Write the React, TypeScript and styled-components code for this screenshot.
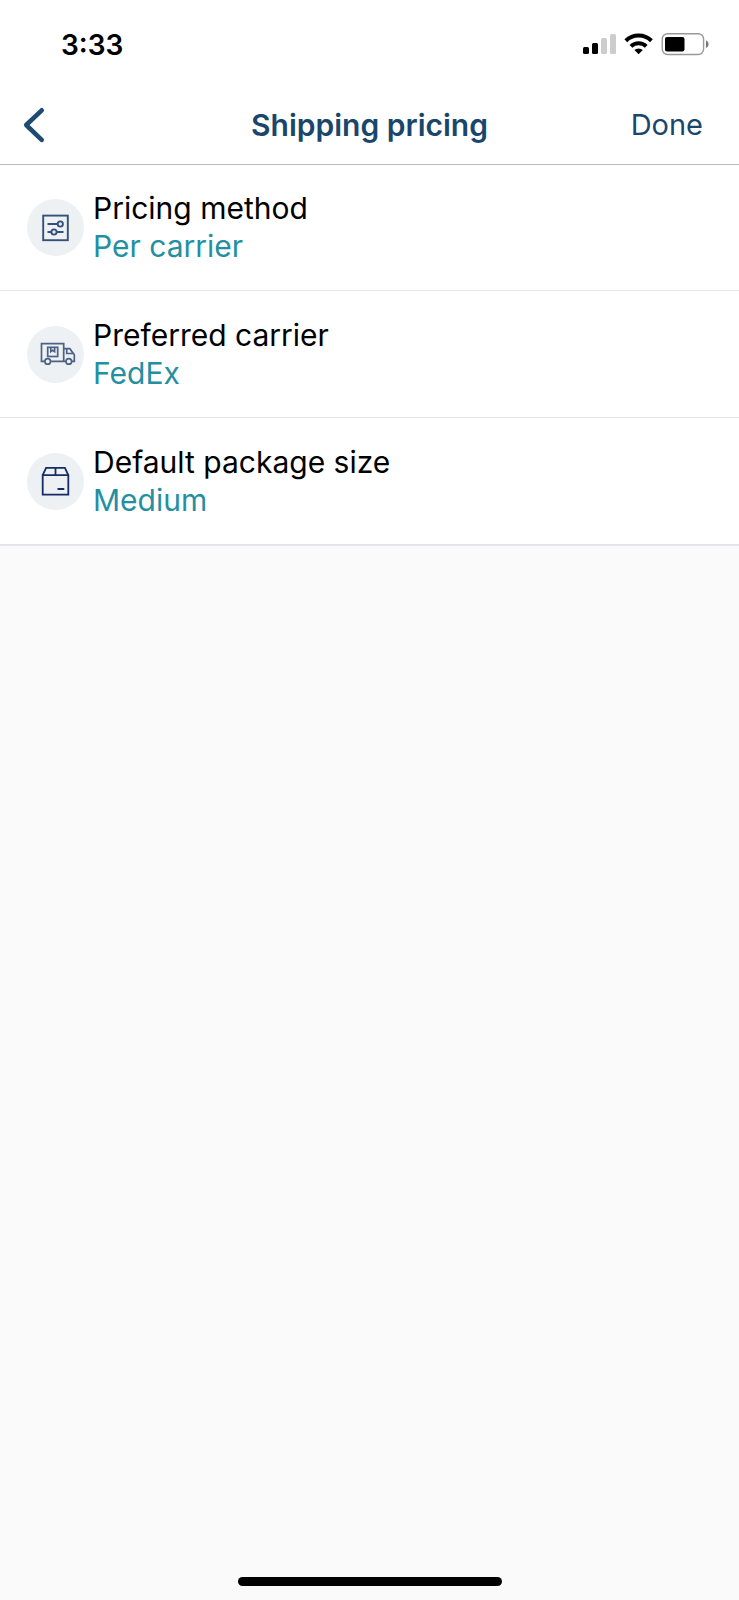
import React from "react";
import styled, { createGlobalStyle } from "styled-components";

const GlobalStyle = createGlobalStyle`
  *, *::before, *::after { box-sizing: border-box; }
  body {
    margin: 0;
    background: #fafafa;
    color: #000;
    font-family: Inter, "Liberation Sans", sans-serif;
  }
  button { font: inherit; color: inherit; background: none; border: 0; padding: 0; cursor: pointer; }
`;

const Screen = styled.div`
  min-height: 100vh;
  display: flex;
  flex-direction: column;
`;

const StatusBar = styled.div`
  display: flex;
  align-items: center;
  justify-content: space-between;
  height: 88px;
  padding: 2px 29px 0 61px;
  background: #fff;
`;

const Clock = styled.time`
  font-size: 28px;
  line-height: 34px;
  font-weight: 600;
`;

const NavBar = styled.header`
  position: relative;
  display: grid;
  grid-template-columns: 1fr auto 1fr;
  align-items: center;
  height: 76px;
  padding: 0 36px 2px 20px;
  background: #fff;
  color: #1a466c;
  font-size: 30px;
  line-height: 36px;
  box-shadow: 0 1px 0 #bdbdbd;
`;

const BackButton = styled.button`
  display: flex;
  justify-self: start;
`;

const Title = styled.h1`
  margin: 0 0 0 16px;
  font-size: inherit;
  font-weight: 600;
`;

const DoneButton = styled.button`
  justify-self: end;
  font-size: 29px;
`;

const SettingsList = styled.ul`
  margin: 0;
  padding: 0;
  list-style: none;
  background: #fff;
`;

const SettingsItem = styled.li`
  border-bottom: 1px solid #dfe7e9;

  &:last-child {
    box-shadow: 0 1px 0 #e6e9ea;
  }
`;

const RowButton = styled.button`
  display: flex;
  align-items: center;
  gap: 9px;
  width: 100%;
  padding: 25px 27px;
  text-align: left;
`;

const IconDisc = styled.span`
  display: flex;
  flex: none;
  align-items: center;
  justify-content: center;
  width: 57px;
  height: 57px;
  border-radius: 50%;
  background: #edf1f4;
`;

const RowText = styled.span`
  display: flex;
  flex-direction: column;
  font-size: 30px;
  line-height: 38px;
`;

const Value = styled.span`
  color: #258fa2;
`;

const HomeArea = styled.footer`
  display: flex;
  justify-content: center;
  margin-top: auto;
  padding-bottom: 14px;
`;

const HomeIndicator = styled.div`
  width: 264px;
  height: 9px;
  border-radius: 5px;
  background: #000;
`;

const StatusIcons = () => (
  <svg width="128" height="24" viewBox="582 33 128 24" role="img" aria-label="Signal, Wi-Fi and battery">
    <rect x="583" y="47" width="6" height="7" rx="1.5" />
    <rect x="592" y="43" width="6" height="11" rx="1.5" />
    <g fill="#cdcdcd">
      <rect x="601" y="38" width="6" height="16" rx="1.5" />
      <rect x="610" y="34" width="6" height="20" rx="1.5" />
    </g>
    <g fill="none" stroke="#000" strokeWidth="4">
      <path d="M625.8 40.8a18.4 18.4 0 0 1 25.6 0" />
      <path d="M631 46.4a11 11 0 0 1 15.2 0" />
    </g>
    <path d="M638.6 54.2l-4.2-4.1a6.2 6.2 0 0 1 8.4 0z" />
    <rect x="662.2" y="33.7" width="41.4" height="20.8" rx="5.5" fill="#fff" stroke="#999" strokeWidth="1.4" />
    <rect x="665" y="37" width="19.5" height="14.5" rx="2" />
    <path d="M706 40.5c3.4 1.2 3.4 6.2 0 7.4z" fill="#777" />
  </svg>
);

const ChevronIcon = () => (
  <svg width="28" height="40" viewBox="20 105 28 40" fill="none" stroke="#1f4b73" strokeWidth="4.6" strokeLinecap="round" strokeLinejoin="round" aria-hidden="true">
    <path d="M41.7 110.3L26.2 125l15.5 14.8" />
  </svg>
);

const SlidersIcon = () => (
  <svg width="57" height="57" viewBox="0 0 57 57" fill="none" stroke="#35507a" strokeWidth="1.9" aria-hidden="true">
    <rect x="16.2" y="16.6" width="24.6" height="24.6" />
    <path d="M20.5 25h10M20.5 33h4M30 33h6.5" />
    <circle cx="33.3" cy="25" r="2.6" />
    <circle cx="27" cy="33" r="2.6" />
  </svg>
);

const TruckIcon = () => (
  <svg width="57" height="57" viewBox="0 0 57 57" fill="none" stroke="#4b6285" strokeWidth="1.7" aria-hidden="true">
    <path d="M17.8 35.4H14.5V17.6h22.2v17.8H23.6M36.7 22.7h6.1l4.5 6v6.7h-2.6M36.7 35.4h2.2M39.7 22.7v4.8h6.8" />
    <circle cx="20.7" cy="35.4" r="2.8" />
    <circle cx="41.8" cy="35.4" r="2.8" />
    <rect x="20.7" y="21.3" width="10" height="9.2" />
    <path d="M23.8 21.3v4.3l1.9-1.3 1.9 1.3v-4.3" />
  </svg>
);

const PackageIcon = () => (
  <svg width="57" height="57" viewBox="0 0 57 57" fill="none" stroke="#172b65" strokeWidth="1.8" aria-hidden="true">
    <path d="M15.7 22.2h25.6v19.4H15.7z" />
    <path d="M15.7 22.2l3.4-7.4h18.8l3.4 7.4M28.5 14.8v7.4M30.5 36h6.8" />
  </svg>
);

const settings = [
  { label: "Pricing method", value: "Per carrier", Icon: SlidersIcon },
  { label: "Preferred carrier", value: "FedEx", Icon: TruckIcon },
  { label: "Default package size", value: "Medium", Icon: PackageIcon },
];

export default function App() {
  return (
    <>
      <GlobalStyle />
      <Screen>
        <StatusBar>
          <Clock>3:33</Clock>
          <StatusIcons />
        </StatusBar>
        <NavBar>
          <BackButton type="button" aria-label="Back">
            <ChevronIcon />
          </BackButton>
          <Title>Shipping pricing</Title>
          <DoneButton type="button">Done</DoneButton>
        </NavBar>
        <main>
          <SettingsList>
            {settings.map(({ label, value, Icon }) => (
              <SettingsItem key={label}>
                <RowButton type="button">
                  <IconDisc>
                    <Icon />
                  </IconDisc>
                  <RowText>
                    <span>{label}</span>
                    <Value>{value}</Value>
                  </RowText>
                </RowButton>
              </SettingsItem>
            ))}
          </SettingsList>
        </main>
        <HomeArea>
          <HomeIndicator />
        </HomeArea>
      </Screen>
    </>
  );
}
